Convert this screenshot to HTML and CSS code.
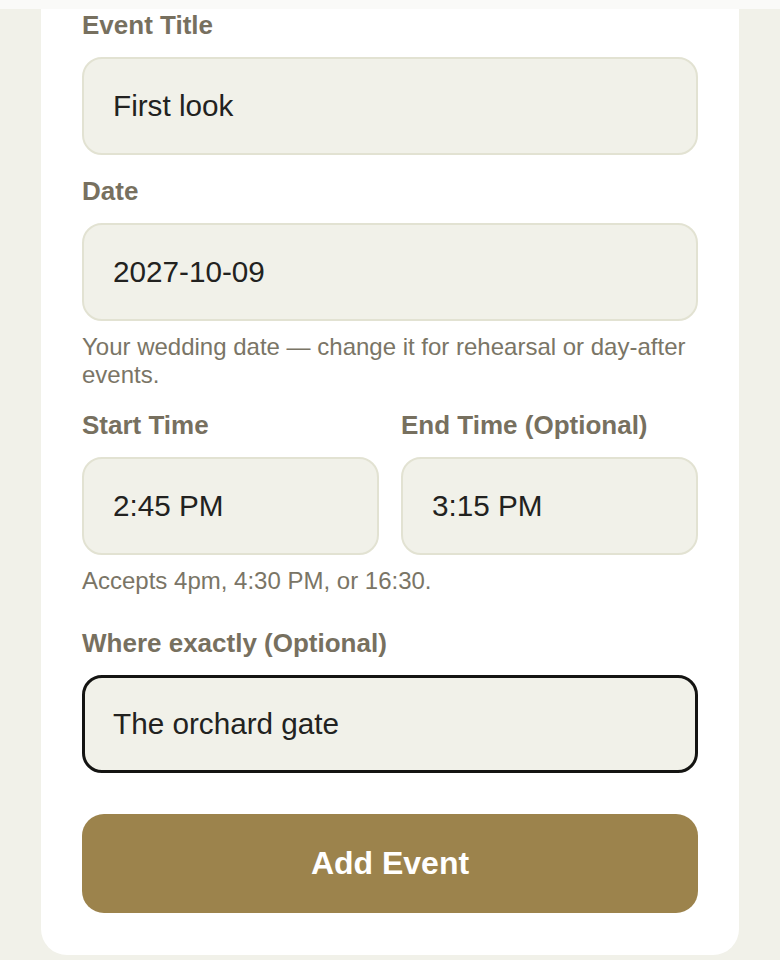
FILE: index.html
```html
<!DOCTYPE html>
<html>
<head>
<meta charset="utf-8">
<link rel="stylesheet" href="styles.css">
</head>
<body>
<div class="topbar"></div>
<div class="page">
  <form class="card">
    <div class="field">
      <label class="label">Event Title</label>
      <div class="input">First look</div>
    </div>
    <div class="field">
      <label class="label">Date</label>
      <div class="input">2027-10-09</div>
      <p class="hint">Your wedding date — change it for rehearsal or day-after events.</p>
    </div>
    <div class="field field-wide">
      <div class="row">
        <div class="col">
          <label class="label">Start Time</label>
          <div class="input">2:45 PM</div>
        </div>
        <div class="col">
          <label class="label">End Time (Optional)</label>
          <div class="input">3:15 PM</div>
        </div>
      </div>
      <p class="hint">Accepts 4pm, 4:30 PM, or 16:30.</p>
    </div>
    <div class="field">
      <label class="label">Where exactly (Optional)</label>
      <div class="input input-focus">The orchard gate</div>
    </div>
    <button type="button" class="btn">Add Event</button>
  </form>
</div>
</body>
</html>
```
FILE: styles.css
```css
html, body {
  margin: 0;
  padding: 0;
  background: #f1f1e9;
  font-family: "Liberation Sans", Arial, sans-serif;
}
.topbar {
  height: 9px;
  background: #fafaf8;
}
.page {
  padding: 0 41px 5px;
}
.card {
  background: #ffffff;
  border-radius: 0 0 26px 26px;
  padding: 1px 41px 42px;
  display: flex;
  flex-direction: column;
}
.field {
  display: flex;
  flex-direction: column;
  margin-bottom: 21px;
}
.field-wide {
  margin-bottom: 33px;
}
.label {
  display: block;
  font-size: 26px;
  line-height: 30px;
  font-weight: bold;
  color: #77705f;
  margin-bottom: 17px;
}
.input {
  box-sizing: border-box;
  height: 98px;
  border: 2px solid #e2e2d2;
  border-radius: 20px;
  background: #f1f1e9;
  color: #222220;
  font-size: 29.7px;
  padding: 0 29px;
  display: flex;
  align-items: center;
}
.input-focus {
  border: 3px solid #141412;
  padding: 0 28px;
}
.hint {
  margin: 12px 0 0;
  font-size: 24px;
  line-height: 28px;
  color: #7a7566;
}
.row {
  display: grid;
  grid-template-columns: 1fr 1fr;
  column-gap: 22px;
}
.col {
  display: flex;
  flex-direction: column;
}
.btn {
  margin-top: 20px;
  height: 99px;
  border: none;
  border-radius: 22px;
  background: #9c834c;
  color: #ffffff;
  font-family: "Liberation Sans", Arial, sans-serif;
  font-size: 32px;
  font-weight: bold;
  cursor: pointer;
}
```
